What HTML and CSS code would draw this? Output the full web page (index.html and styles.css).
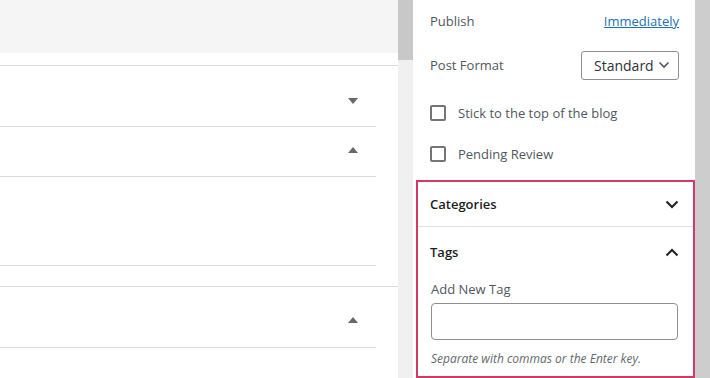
FILE: index.html
```html
<!DOCTYPE html>
<html lang="en">
<head>
    <meta charset="UTF-8">
    <meta name="viewport" content="width=device-width, initial-scale=1.0">
    <title>Edit Post</title>
    <link rel="stylesheet" href="styles.css">
</head>
<body>

    <div class="editor">
        <div class="top-band"></div>

        <div class="meta-boxes">
            <div class="box-head full">
                <span class="arrow down"></span>
            </div>
            <div class="box-head short up-head">
                <span class="arrow up"></span>
            </div>
            <div class="box-body"></div>
            <div class="box-gap"></div>
            <div class="box-head full last-head">
                <span class="arrow up"></span>
            </div>
            <div class="box-end"></div>
        </div>
    </div>

    <div class="scroll-left"><div class="thumb"></div></div>

    <div class="sidebar">
        <div class="row publish-row">
            <span class="label">Publish</span>
            <a href="#" class="link">Immediately</a>
        </div>

        <div class="row format-row">
            <span class="label">Post Format</span>
            <div class="select">
                <span>Standard</span>
                <svg width="12" height="8" viewBox="0 0 12 8"><path d="M1.5 1.5 L6 6 L10.5 1.5" fill="none" stroke="#50575e" stroke-width="1.6"/></svg>
            </div>
        </div>

        <label class="check-row first">
            <span class="checkbox"></span>
            <span class="label">Stick to the top of the blog</span>
        </label>
        <label class="check-row">
            <span class="checkbox"></span>
            <span class="label">Pending Review</span>
        </label>

        <div class="panel-group">
            <div class="panel-head">
                <span>Categories</span>
                <svg width="14" height="9" viewBox="0 0 14 9"><path d="M1.5 1.5 L7 7 L12.5 1.5" fill="none" stroke="#1e1e1e" stroke-width="2"/></svg>
            </div>
            <div class="panel-head open">
                <span>Tags</span>
                <svg width="14" height="9" viewBox="0 0 14 9"><path d="M1.5 7.5 L7 2 L12.5 7.5" fill="none" stroke="#1e1e1e" stroke-width="2"/></svg>
            </div>
            <div class="tag-body">
                <div class="tag-label">Add New Tag</div>
                <div class="tag-input"></div>
                <div class="tag-help">Separate with commas or the Enter key.</div>
            </div>
        </div>
    </div>

    <div class="scroll-right"></div>

</body>
</html>
```

FILE: styles.css
```css
body {
    margin: 0;
    display: flex;
    height: 378px;
    overflow: hidden;
    font-family: "Open Sans", "Noto Sans", sans-serif;
    font-size: 13px;
    background-color: #fff;
}

/* left: post editor with meta boxes */
.editor {
    width: 398px;
    flex-shrink: 0;
}
.top-band {
    height: 53px;
    background-color: #f5f5f5;
}
.meta-boxes {
    padding-top: 12px;
}
.box-head {
    display: flex;
    justify-content: flex-end;
    border-top: 1px solid #dcdcde;
    padding-right: 18px;
    box-sizing: border-box;
}
.box-head.full {
    height: 61px;
    width: 398px;
    padding-right: 40px;
    padding-top: 32px;
}
.box-head.short {
    width: 376px;
}
.up-head {
    height: 50px;
    padding-top: 20px;
}
.last-head {
    padding-top: 30px !important;
}
.box-body {
    width: 376px;
    height: 89px;
    border-top: 1px solid #dcdcde;
    box-sizing: border-box;
}
.box-gap {
    width: 376px;
    height: 21px;
    border-top: 1px solid #dcdcde;
    box-sizing: border-box;
}
.box-end {
    width: 376px;
    border-top: 1px solid #dcdcde;
}
.arrow {
    width: 0;
    height: 0;
    border-left: 5px solid transparent;
    border-right: 5px solid transparent;
}
.arrow.down {
    border-top: 6px solid #646970;
}
.arrow.up {
    border-bottom: 6px solid #646970;
}

/* scrollbars */
.scroll-left {
    width: 15px;
    flex-shrink: 0;
    background-color: #f0f0f0;
}
.thumb {
    height: 60px;
    background-color: #c8c8c8;
}
.scroll-right {
    width: 15px;
    flex-shrink: 0;
    background-color: #cdcdcd;
}

/* right: settings sidebar */
.sidebar {
    width: 282px;
    flex-shrink: 0;
    background-color: #fff;
    color: #50575e;
}
.row {
    display: flex;
    justify-content: space-between;
    align-items: center;
    padding: 0 16px 0 17px;
}
.publish-row {
    height: 42px;
}
.format-row {
    height: 46px;
}
.link {
    color: #2271b1;
    text-decoration: underline;
}
.select {
    width: 98px;
    height: 29px;
    box-sizing: border-box;
    border: 1px solid #8c8f94;
    border-radius: 3px;
    display: flex;
    align-items: center;
    justify-content: space-between;
    padding: 0 8px 0 12px;
    color: #2c3338;
    font-size: 14px;
}
.check-row {
    display: flex;
    align-items: center;
    gap: 12px;
    padding-left: 17px;
    height: 36px;
}
.check-row.first {
    height: 48px;
    padding-top: 2px;
    box-sizing: border-box;
}
.checkbox {
    width: 16px;
    height: 16px;
    box-sizing: border-box;
    border: 2px solid #757575;
    border-radius: 2px;
}

.panel-group {
    margin: 8px 0 0 3px;
    border: 2px solid #d63864;
    height: 198px;
    box-sizing: border-box;
    color: #1e1e1e;
}
.panel-head {
    display: flex;
    justify-content: space-between;
    align-items: center;
    height: 44px;
    padding: 0 14px 0 12px;
    font-weight: 600;
    border-bottom: 1px solid #e0e0e0;
}
.panel-head.open {
    border-bottom: none;
    height: 50px;
}
.tag-body {
    padding: 3px 15px 0 13px;
}
.tag-label {
    color: #50575e;
    font-size: 13px;
}
.tag-input {
    margin-top: 5px;
    height: 37px;
    box-sizing: border-box;
    border: 1px solid #8c8f94;
    border-radius: 4px;
}
.tag-help {
    margin-top: 10px;
    font-size: 12px;
    font-style: italic;
    color: #646970;
}
```
